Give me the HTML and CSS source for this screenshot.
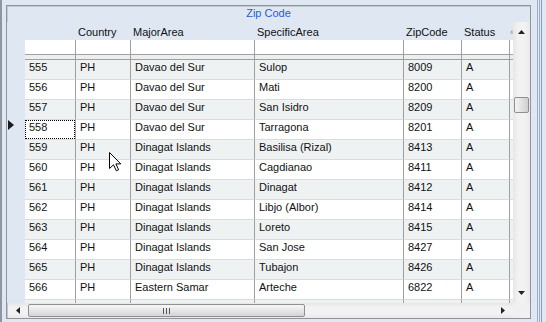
FILE: index.html
```html
<!DOCTYPE html>
<html lang="en">
<head>
  <meta charset="UTF-8" />
  <title>Zip Code</title>
  <link rel="stylesheet" href="styles.css">
</head>
<body>

<div class="window">
  <div class="panel">
    <div class="grid">
      <div class="caption">Zip Code</div>

      <div class="main">
        <div class="row head">
          <div class="rh"></div>
          <div class="c"></div>
          <div class="c">Country</div>
          <div class="c">MajorArea</div>
          <div class="c">SpecificArea</div>
          <div class="c">ZipCode</div>
          <div class="c">Status</div>
          <div class="c end"><span class="more">&laquo;</span></div>
        </div>

        <!-- filter row -->
        <div class="row filter">
          <div class="rh"></div>
          <div class="c"></div><div class="c"></div><div class="c"></div><div class="c"></div><div class="c"></div><div class="c"></div><div class="c end"></div>
        </div>

        <div class="row sep">
          <div class="rh"></div>
          <div class="c"></div><div class="c"></div><div class="c"></div><div class="c"></div><div class="c"></div><div class="c"></div><div class="c end"></div>
        </div>

        <div class="rows">
          <div class="row alt first"><div class="rh"></div><div class="c">555</div><div class="c">PH</div><div class="c">Davao del Sur</div><div class="c">Sulop</div><div class="c">8009</div><div class="c">A</div><div class="c end"></div></div>
          <div class="row"><div class="rh"></div><div class="c">556</div><div class="c">PH</div><div class="c">Davao del Sur</div><div class="c">Mati</div><div class="c">8200</div><div class="c">A</div><div class="c end"></div></div>
          <div class="row alt"><div class="rh"></div><div class="c">557</div><div class="c">PH</div><div class="c">Davao del Sur</div><div class="c">San Isidro</div><div class="c">8209</div><div class="c">A</div><div class="c end"></div></div>
          <div class="row current">
            <div class="rh">
              <svg class="pointer" width="7" height="10" viewBox="0 0 7 10"><path d="M0 0 L6 5 L0 10 Z" fill="#1a1a1a"/></svg>
            </div>
            <div class="c focus">558</div><div class="c">PH</div><div class="c">Davao del Sur</div><div class="c">Tarragona</div><div class="c">8201</div><div class="c">A</div><div class="c end"></div>
          </div>
          <div class="row alt"><div class="rh"></div><div class="c">559</div><div class="c">PH</div><div class="c">Dinagat Islands</div><div class="c">Basilisa (Rizal)</div><div class="c">8413</div><div class="c">A</div><div class="c end"></div></div>
          <div class="row"><div class="rh"></div><div class="c">560</div><div class="c">PH</div><div class="c">Dinagat Islands</div><div class="c">Cagdianao</div><div class="c">8411</div><div class="c">A</div><div class="c end"></div></div>
          <div class="row alt"><div class="rh"></div><div class="c">561</div><div class="c">PH</div><div class="c">Dinagat Islands</div><div class="c">Dinagat</div><div class="c">8412</div><div class="c">A</div><div class="c end"></div></div>
          <div class="row"><div class="rh"></div><div class="c">562</div><div class="c">PH</div><div class="c">Dinagat Islands</div><div class="c">Libjo (Albor)</div><div class="c">8414</div><div class="c">A</div><div class="c end"></div></div>
          <div class="row alt"><div class="rh"></div><div class="c">563</div><div class="c">PH</div><div class="c">Dinagat Islands</div><div class="c">Loreto</div><div class="c">8415</div><div class="c">A</div><div class="c end"></div></div>
          <div class="row"><div class="rh"></div><div class="c">564</div><div class="c">PH</div><div class="c">Dinagat Islands</div><div class="c">San Jose</div><div class="c">8427</div><div class="c">A</div><div class="c end"></div></div>
          <div class="row alt"><div class="rh"></div><div class="c">565</div><div class="c">PH</div><div class="c">Dinagat Islands</div><div class="c">Tubajon</div><div class="c">8426</div><div class="c">A</div><div class="c end"></div></div>
          <div class="row"><div class="rh"></div><div class="c">566</div><div class="c">PH</div><div class="c">Eastern Samar</div><div class="c">Arteche</div><div class="c">6822</div><div class="c">A</div><div class="c end"></div></div>
          <div class="row alt"><div class="rh"></div><div class="c">567</div><div class="c">PH</div><div class="c">Eastern Samar</div><div class="c">Balangiga</div><div class="c">6812</div><div class="c">A</div><div class="c end"></div></div>
        </div>
      </div>

      <!-- vertical scrollbar -->
      <div class="vscroll">
        <svg class="arrow" width="7" height="4" viewBox="0 0 7 4"><path d="M3.5 0 L7 4 L0 4 Z" fill="#222"/></svg>
        <div class="vtrack"><div class="vthumb"></div></div>
        <svg class="arrow" width="7" height="4" viewBox="0 0 7 4"><path d="M0 0 L7 0 L3.5 4 Z" fill="#222"/></svg>
      </div>

      <!-- horizontal scrollbar -->
      <div class="hscroll">
        <svg class="harrow" width="4" height="7" viewBox="0 0 4 7"><path d="M4 0 L4 7 L0 3.5 Z" fill="#222"/></svg>
        <div class="htrack">
          <div class="hthumb">
            <svg width="7" height="6" viewBox="0 0 7 6"><path d="M0.5 0 V6 M3.5 0 V6 M6.5 0 V6" stroke="#555" stroke-width="1"/></svg>
          </div>
        </div>
        <svg class="harrow" width="4" height="7" viewBox="0 0 4 7"><path d="M0 0 L4 3.5 L0 7 Z" fill="#222"/></svg>
      </div>
      <div class="corner"></div>
    </div>
  </div>
  <div class="edge"></div>
</div>

<!-- mouse cursor -->
<svg class="cursor" width="13" height="20" viewBox="0 0 13 20">
  <path d="M0.5 0.5 L0.5 16.5 L4.5 12.8 L7.3 18.8 L9.6 17.8 L6.9 11.9 L11.8 11.9 Z" fill="#fff" stroke="#000" stroke-width="1" stroke-linejoin="miter"/>
</svg>

</body>
</html>
```

FILE: styles.css
```css
* {
  box-sizing: border-box;
}

body {
  margin: 0;
  width: 546px;
  height: 322px;
  overflow: hidden;
  position: relative;
  background: #dfe7f3;
  font-family: "Liberation Sans", Arial, sans-serif;
  font-size: 11px;
  color: #111;
}

.window {
  display: flex;
  height: 322px;
  border-left: 2px solid #8d96a1;
}

.panel {
  padding: 5px 0 0 4px;
}

.grid {
  width: 525px;
  height: 314px;
  border: 1px solid #8e959c;
  box-shadow: inset 1px 1px 0 #c3c9d0;
  display: grid;
  grid-template-columns: 506px 17px;
  grid-template-rows: 16px 281px 15px;
}

.caption {
  grid-column: 1 / -1;
  text-align: center;
  line-height: 14px;
  color: #1f5fcf;
}

.main {
  display: flex;
  flex-direction: column;
  overflow: hidden;
}

.row {
  display: grid;
  grid-template-columns: 18px 51px 55px 124px 149px 58px 48px 3px;
  height: 20px;
  flex-shrink: 0;
}

.c {
  border-right: 1px solid #a0a0a0;
  border-top: 1px solid #dcdcdc;
  padding: 0 4px;
  line-height: 15px;
  white-space: nowrap;
  overflow: hidden;
  background: #fff;
}

.c.end {
  border-right: none;
  padding: 0;
}

.row.alt .c {
  background: #eff2f3;
}

.row.first .c {
  border-top-color: #a0a0a0;
}

.rh {
  background: #dfe7f3;
}

/* header row */
.row.head {
  height: 18px;
}

.row.head .c {
  background: #dfe7f3;
  border: none;
  padding: 2px 2px 0;
  line-height: 16px;
}

.row.head .c.end {
  padding: 0;
}

.more {
  display: block;
  color: #8a8a8a;
  font-size: 9px;
  line-height: 12px;
  margin-top: 4px;
}

.row.filter {
  height: 15px;
}

.row.filter .c {
  border-top: none;
  border-bottom: 1px solid #a0a0a0;
}

.row.sep {
  height: 4px;
}

.row.sep .c {
  border-top: none;
  background: #eceeef;
}

.rows {
  display: flex;
  flex-direction: column;
}

.pointer {
  display: block;
  margin: 1px 0 0 1px;
}

.focus {
  position: relative;
}

.focus::after {
  content: "";
  position: absolute;
  top: 0;
  left: 0;
  right: 0;
  bottom: 0;
  border: 1px dotted #000;
}

/* scrollbars */
.vscroll {
  display: flex;
  flex-direction: column;
  align-items: center;
  background: linear-gradient(to right, #e6e6e6, #f2f2f2 30%, #f2f2f2 70%, #e9e9e9);
}

.vscroll .arrow {
  margin: 8px 0;
  flex-shrink: 0;
}

.vtrack {
  flex: 1;
  width: 100%;
  padding: 55px 1px 0 1px;
}

.vthumb {
  width: 15px;
  height: 16px;
  border: 1px solid #8f8f8f;
  border-radius: 2px;
  background: linear-gradient(to right, #f4f4f4, #e2e2e2 50%, #cfcfcf);
}

.hscroll {
  display: flex;
  align-items: center;
  background: linear-gradient(to bottom, #e6e6e6, #f2f2f2 30%, #f2f2f2 70%, #e9e9e9);
  border-left: 1px solid #c4c4c4;
}

.harrow {
  margin: 0 8px;
  flex-shrink: 0;
}

.htrack {
  flex: 1;
  height: 100%;
  padding: 1px 0;
}

.hthumb {
  width: 277px;
  height: 13px;
  border: 1px solid #8f8f8f;
  border-radius: 2px;
  background: linear-gradient(to bottom, #f7f7f7, #e6e6e6 50%, #d4d4d4);
  display: flex;
  align-items: center;
  justify-content: center;
}

.corner {
  background: #f0f0f0;
}

.edge {
  width: 5px;
  margin-left: 6px;
  background: linear-gradient(to right, #9aabc8 0 1px, #e6ecf6 1px 2px, #9aabc8 2px 3px, #e6ecf6 3px 4px, #7f9ccc 4px 5px);
}

.cursor {
  position: absolute;
  left: 109px;
  top: 152px;
}
```
